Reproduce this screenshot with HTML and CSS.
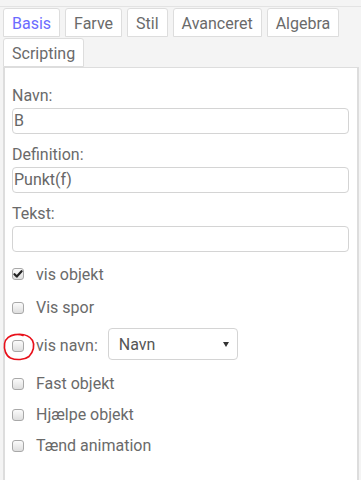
FILE: index.html
```html
<!DOCTYPE html>
<html lang="da">
<head>
  <meta charset="UTF-8">
  <meta name="viewport" content="width=device-width, initial-scale=1.0">
  <title>Egenskaber</title>
  <link rel="stylesheet" href="styles.css">
</head>
<body>
  <div class="top-strip"></div>
  <div class="tabs">
    <div class="tab active">Basis</div>
    <div class="tab">Farve</div>
    <div class="tab">Stil</div>
    <div class="tab">Avanceret</div>
    <div class="tab">Algebra</div>
    <div class="tab">Scripting</div>
  </div>

  <div class="panel">
    <div class="field">
      <div class="field-label">Navn:</div>
      <div class="text-input">B</div>
    </div>
    <div class="field">
      <div class="field-label">Definition:</div>
      <div class="text-input">Punkt(f)</div>
    </div>
    <div class="field">
      <div class="field-label">Tekst:</div>
      <div class="text-input"></div>
    </div>

    <div class="checks">
      <div class="check-row">
        <span class="box checked">
          <svg width="10" height="10" viewBox="0 0 10 10"><path d="M1.5 5.2 L3.8 7.6 L8.6 2.2" fill="none" stroke="#222" stroke-width="2.2" stroke-linecap="round" stroke-linejoin="round"/></svg>
        </span>
        <span class="check-label">vis objekt</span>
      </div>
      <div class="check-row">
        <span class="box"></span>
        <span class="check-label">Vis spor</span>
      </div>
      <div class="check-row name-row">
        <span class="box marked">
          <svg class="scribble" width="34" height="30" viewBox="0 0 34 30"><path d="M14 2.5 C20 1.8 27 3 30.5 8.5 C33 13 31.5 20 27 24.5 C22.5 28 14 28.5 8.5 26 C3.5 23.5 1.8 17 2.6 11.5 C3.4 6.5 8 3.2 13 2.6 C16 2.3 19 2.6 21 3.4" fill="none" stroke="#e8101a" stroke-width="1.6" stroke-linecap="round"/></svg>
        </span>
        <span class="check-label">vis navn:</span>
        <div class="select">
          <span>Navn</span>
          <span class="arrow"></span>
        </div>
      </div>
      <div class="check-row">
        <span class="box"></span>
        <span class="check-label">Fast objekt</span>
      </div>
      <div class="check-row">
        <span class="box"></span>
        <span class="check-label">Hjælpe objekt</span>
      </div>
      <div class="check-row">
        <span class="box"></span>
        <span class="check-label">Tænd animation</span>
      </div>
    </div>
  </div>
</body>
</html>
```

FILE: styles.css
```css
body, html {
  margin: 0; padding: 0;
  font-family: Roboto, 'Liberation Sans', sans-serif;
  font-size: 16px;
  background: #f4f4f4;
  color: #6a6a6a;
  overflow: hidden;
}
.top-strip {
  height: 6px;
  border-bottom: 1px solid #e3e3e3;
}
.tabs {
  display: flex;
  flex-wrap: wrap;
  gap: 1px 5px;
  padding: 1px 0 0 3px;
}
.tab {
  background: #fff;
  border: 1px solid #ddd;
  border-radius: 3px 3px 0 0;
  padding: 5px 8px 3px;
  line-height: 19px;
  color: #6a6a6a;
}
.tab.active {
  color: #6b6bff;
}
.panel {
  margin-left: 3px;
  width: 356px;
  box-sizing: border-box;
  height: 420px;
  background: #fff;
  border: 1px solid #ddd;
  border-left-width: 2px;
  border-right-width: 2px;
  border-bottom: none;
  padding: 18px 8px 0 7px;
}
.field {
  margin-bottom: 11px;
}
.field-label {
  line-height: 20px;
  margin-bottom: 2px;
}
.text-input {
  height: 26px;
  box-sizing: border-box;
  border: 1px solid #d4d4d4;
  border-radius: 4px;
  padding: 0 1px;
  line-height: 24px;
  color: #666;
}
.check-row {
  display: flex;
  align-items: center;
  min-height: 31px;
}
.check-row:first-child {
  min-height: 36px;
  margin-top: -7px;
}
.box {
  position: relative;
  width: 12px; height: 12px;
  box-sizing: border-box;
  border: 1px solid #a8a8a8;
  border-radius: 3px;
  background: linear-gradient(#fbfbfb, #dedede);
  margin-right: 12px;
  display: flex;
  align-items: center;
  justify-content: center;
  flex-shrink: 0;
}
.box.checked svg {
  display: block;
}
.scribble {
  position: absolute;
  left: -11px; top: -9px;
}
.name-row {
  padding: 5px 0 8px;
}
.name-row .box, .name-row .check-label {
  margin-top: 3px;
}
.select {
  margin-left: 10px;
  width: 130px; height: 32px;
  box-sizing: border-box;
  border: 1px solid #d4d4d4;
  border-radius: 4px;
  background: #fff;
  display: flex;
  align-items: center;
  justify-content: space-between;
  padding: 0 8px 0 10px;
  color: #555;
}
.arrow {
  width: 0; height: 0;
  border-left: 3px solid transparent;
  border-right: 3px solid transparent;
  border-top: 5px solid #333;
}
```
